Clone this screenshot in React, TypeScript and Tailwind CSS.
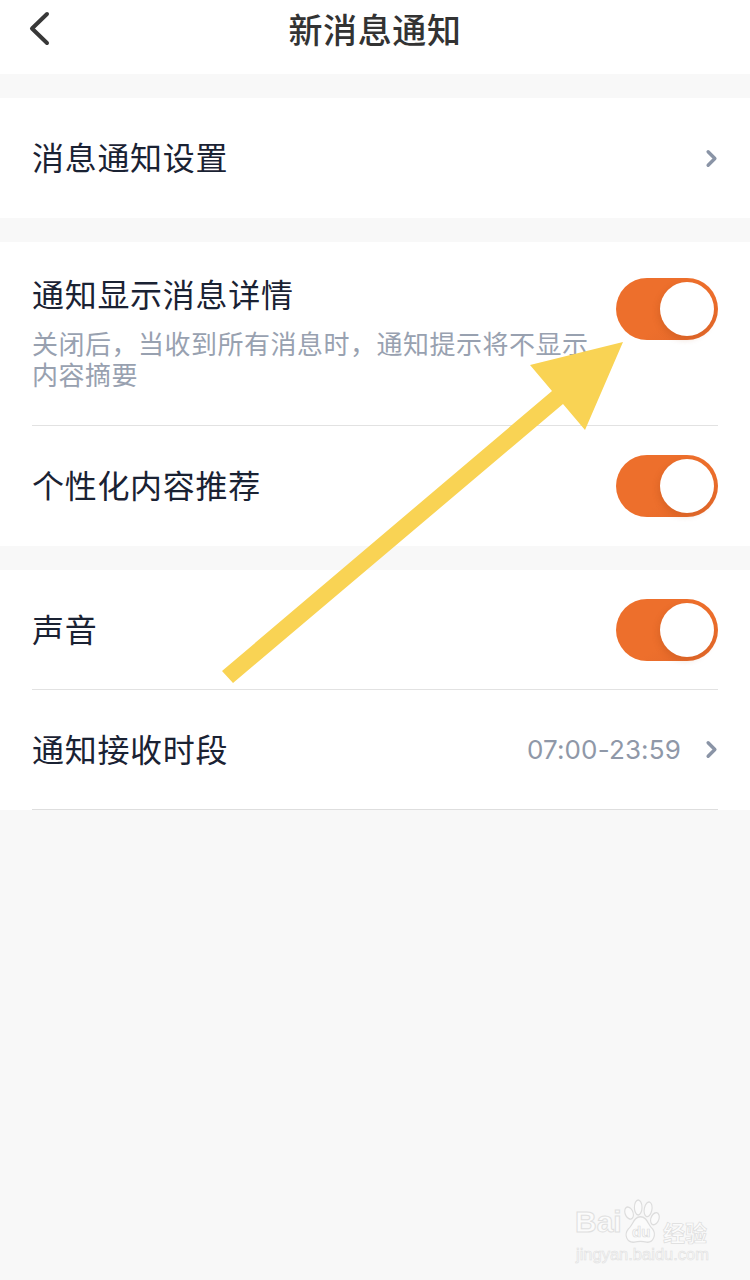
import { ChevronRight } from 'lucide-react'

const CJK = "font-['Noto_Sans_CJK_SC','Noto_Sans',sans-serif]"

// orange iOS style switch, always on in this screen
function Toggle() {
  return (
    <div className="flex h-[62px] w-[102px] shrink-0 items-center justify-end rounded-full bg-gradient-to-br from-[#ed6f2c] from-60% to-[#e2672a] pr-[4px]">
      <div className="h-[54px] w-[54px] rounded-full bg-white shadow-[-2px_3px_6px_rgba(160,70,20,0.22)]" />
    </div>
  )
}

function Chevron() {
  return <ChevronRight className="ml-[17px] mr-[-7px] h-[27px] w-[27px] shrink-0 text-[#8a94a6]" strokeWidth={3} />
}

function Label({ children }: { children: string }) {
  return <span className="mb-[4px] text-[32px] leading-[40px] tracking-[0.7px] text-[#1a2233]">{children}</span>
}

export default function App() {
  return (
    <div className={`relative h-[1280px] w-[750px] overflow-hidden bg-[#f8f8f8] ${CJK}`}>
      {/* Header */}
      <div className="relative flex h-[74px] items-center justify-center bg-white pb-[17px]">
        <svg className="absolute left-[28px] top-[10px]" width="24" height="36" viewBox="0 0 24 36" fill="none">
          <path d="M19 4 L4 18.5 L19 33" stroke="#383838" strokeWidth="4" strokeLinecap="round" strokeLinejoin="round" />
        </svg>
        <h1 className="text-[34px] font-medium leading-[44px] tracking-[0.6px] text-[#333333]">新消息通知</h1>
      </div>

      {/* Settings entry */}
      <div className="mt-[24px] flex h-[120px] items-center justify-between bg-white pl-[32px] pr-[32px]">
        <Label>消息通知设置</Label>
        <Chevron />
      </div>

      {/* Content options */}
      <div className="mt-[24px] bg-white pl-[32px] pr-[32px]">
        <div className="flex h-[184px] items-start justify-between border-b border-[#e2e2e2] pt-[31px]">
          <div className="w-[562px]">
            <Label>通知显示消息详情</Label>
            <p className="mt-[14px] text-[26px] leading-[31px] tracking-[0.5px] text-[#98a1b0]">
              关闭后，当收到所有消息时，通知提示将不显示内容摘要
            </p>
          </div>
          <div className="mt-[5px]">
            <Toggle />
          </div>
        </div>
        <div className="flex h-[120px] items-center justify-between">
          <Label>个性化内容推荐</Label>
          <Toggle />
        </div>
      </div>

      {/* Sound and time range */}
      <div className="mt-[24px] bg-white pl-[32px] pr-[32px]">
        <div className="flex h-[120px] items-center justify-between border-b border-[#e2e2e2]">
          <Label>声音</Label>
          <Toggle />
        </div>
        <div className="flex h-[120px] items-center justify-between border-b border-[#dedede]">
          <Label>通知接收时段</Label>
          <div className="flex items-center">
            <span className="font-['Inter',sans-serif] text-[26px] tracking-[0.15px] text-[#8f98a8]">07:00-23:59</span>
            <Chevron />
          </div>
        </div>
      </div>

      {/* Annotation arrow drawn over the screenshot */}
      <svg className="pointer-events-none absolute left-0 top-0" width="750" height="1280" viewBox="0 0 750 1280">
        <polygon
          points="623,342 530,365 552,391 222,671 233,683 563,404 585,430"
          fill="#f9d354"
        />
      </svg>

      {/* Watermark */}
      <div className="pointer-events-none absolute left-[575px] top-[1198px] h-[70px] w-[140px] whitespace-nowrap">
        <svg className="absolute left-[48px] top-[1px]" width="38" height="45" viewBox="10 0 50 48" preserveAspectRatio="none" fill="#fbfbfb" stroke="#dddddd" strokeWidth="1.5">
          <ellipse cx="18" cy="15" rx="5" ry="7" transform="rotate(-35 18 15)" />
          <ellipse cx="30" cy="9" rx="5" ry="8" />
          <ellipse cx="43" cy="11" rx="5" ry="8" transform="rotate(15 43 11)" />
          <ellipse cx="52" cy="21" rx="5" ry="7" transform="rotate(35 52 21)" />
          <path d="M33 19 C42 19 43 28 49 32 C54 38 50 47 41 46 C36 45 30 45 25 46 C15 47 11 38 17 32 C23 28 24 19 33 19 Z" />
        </svg>
        <span className="absolute left-0 top-[4px] font-['Liberation_Sans',sans-serif] text-[30px] font-bold leading-[40px] text-[#fbfbfb] [-webkit-text-stroke:1px_#e0e0e0]">Bai</span>
        <span className="absolute left-[57px] top-[25px] font-['Liberation_Sans',sans-serif] text-[15px] font-bold leading-[18px] text-[#fbfbfb] [-webkit-text-stroke:0.7px_#dddddd]">du</span>
        <span className="absolute left-[88px] top-[19px] text-[22px] font-bold leading-[28px] text-[#fbfbfb] [-webkit-text-stroke:0.7px_#dddddd]">经验</span>
        <span className="absolute left-[1px] top-[46px] font-['Liberation_Sans',sans-serif] text-[16.5px] leading-[20px] text-[#fbfbfb] [-webkit-text-stroke:0.6px_#e0e0e0]">jingyan.baidu.com</span>
      </div>
    </div>
  )
}
